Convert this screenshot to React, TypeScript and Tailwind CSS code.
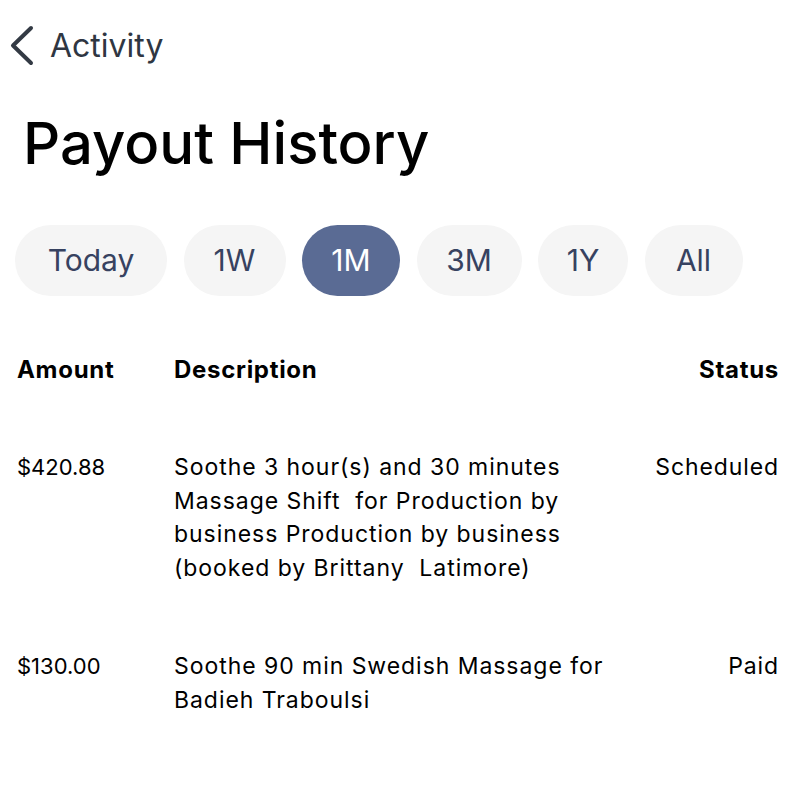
const ranges = [
  { label: "Today", width: "w-[152px]" },
  { label: "1W", width: "w-[102px]" },
  { label: "1M", width: "w-[98px]" },
  { label: "3M", width: "w-[105px]" },
  { label: "1Y", width: "w-[90px]" },
  { label: "All", width: "w-[98px]" },
];

const payouts = [
  {
    amount: "$420.88",
    description:
      "Soothe 3 hour(s) and 30 minutes Massage Shift  for Production by business Production by business (booked by Brittany  Latimore)",
    status: "Scheduled",
  },
  {
    amount: "$130.00",
    description: "Soothe 90 min Swedish Massage for Badieh Traboulsi",
    status: "Paid",
  },
];

export default function App() {
  const active = "1M";

  return (
    <div className="min-h-screen bg-white text-black font-['Inter',sans-serif]">
      {/* back link */}
      <div className="flex items-center h-[92px]">
        <svg className="w-[44px] h-[44px]" viewBox="0 0 44 44" fill="none">
          <polyline
            points="31,4 13,21.5 31,39"
            stroke="#333a44"
            strokeWidth="4"
            strokeLinecap="round"
            strokeLinejoin="round"
          />
        </svg>
        <span className="ml-[6px] text-[32px] text-[#2f3642]">Activity</span>
      </div>

      <h1 className="pl-[23px] pt-[22px] text-[58px] font-medium leading-none">
        Payout History
      </h1>

      <div className="flex gap-[16.5px] px-[15px] mt-[53px]">
        {ranges.map((r) => (
          <button
            key={r.label}
            className={
              r.label === active
                ? `${r.width} h-[71px] rounded-full bg-[#5a6b94] text-white text-[30px]`
                : `${r.width} h-[71px] rounded-full bg-[#f5f5f5] text-[#374260] text-[30px]`
            }
          >
            {r.label}
          </button>
        ))}
      </div>

      <div className="grid grid-cols-[157px_1fr_auto] pl-[17px] pr-[24px] mt-[58px] text-[24px] leading-[32px] font-bold tracking-[0.7px]">
        <div>Amount</div>
        <div>Description</div>
        <div className="text-right">Status</div>
      </div>

      <div className="mt-[65px]">
        {payouts.map((p) => (
          <div
            key={p.amount}
            className="grid grid-cols-[157px_455px_1fr] pl-[17px] pr-[24px] pb-[65px] leading-[33.5px]"
          >
            <div className="text-[22px]">{p.amount}</div>
            <div className="text-[23px] tracking-[0.95px] whitespace-pre-wrap">{p.description}</div>
            <div className="text-[23px] tracking-[0.9px] text-right">{p.status}</div>
          </div>
        ))}
      </div>
    </div>
  );
}
